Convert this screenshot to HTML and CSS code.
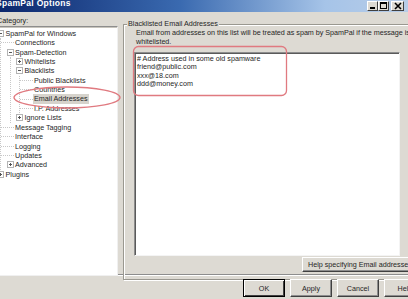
FILE: index.html
```html
<!DOCTYPE html>
<html>
<head>
<meta charset="utf-8">
<link rel="stylesheet" href="styles.css">
</head>
<body>
<div class="window">
  <div class="titlebar">
    <span class="title">SpamPal Options</span>
    <div class="caption-buttons">
      <span class="cbtn"><svg width="11" height="10" viewBox="0 0 11 10"><rect x="3" y="6" width="5" height="2" fill="#000"/></svg></span>
      <span class="cbtn"><svg width="11" height="10" viewBox="0 0 11 10"><rect x="2.5" y="1.5" width="6" height="6" fill="none" stroke="#000"/><rect x="2" y="1" width="7" height="2" fill="#000"/></svg></span>
      <span class="cbtn close"><svg width="12" height="10" viewBox="0 0 12 10"><path d="M3 2 L9 8 M9 2 L3 8" stroke="#000" stroke-width="1.6"/></svg></span>
    </div>
  </div>
  <div class="main">
    <div class="left">
      <div class="label">Category:</div>
      <div class="tree">
        <ul>
          <li><span class="row"><i class="gutter box minus"></i>SpamPal for Windows</span>
            <ul>
              <li><span class="row"><i class="gutter stub"></i>Connections</span></li>
              <li><span class="row"><i class="gutter box minus"></i>Spam-Detection</span>
                <ul>
                  <li><span class="row"><i class="gutter box plus"></i>Whitelists</span></li>
                  <li><span class="row"><i class="gutter box minus"></i>Blacklists</span>
                    <ul>
                      <li><span class="row"><i class="gutter stub"></i>Public Blacklists</span></li>
                      <li><span class="row"><i class="gutter stub"></i>Countries</span></li>
                      <li><span class="row"><i class="gutter stub"></i><span class="sel">Email Addresses</span></span></li>
                      <li><span class="row"><i class="gutter stub"></i>I.P. Addresses</span></li>
                    </ul>
                  </li>
                  <li><span class="row"><i class="gutter box plus"></i>Ignore Lists</span></li>
                </ul>
              </li>
              <li><span class="row"><i class="gutter stub"></i>Message Tagging</span></li>
              <li><span class="row"><i class="gutter stub"></i>Interface</span></li>
              <li><span class="row"><i class="gutter stub"></i>Logging</span></li>
              <li><span class="row"><i class="gutter stub"></i>Updates</span></li>
              <li><span class="row"><i class="gutter box plus"></i>Advanced</span></li>
            </ul>
          </li>
          <li><span class="row"><i class="gutter box plus"></i>Plugins</span></li>
        </ul>
      </div>
    </div>
    <div class="right">
      <div class="group">
        <div class="group-title">Blacklisted Email Addresses</div>
        <p class="desc">Email from addresses on this list will be treated as spam by SpamPal if the message is<br>whitelisted.</p>
        <div class="list">
          <div>&#35; Address used in some old spamware</div>
          <div>friend@public.com</div>
          <div>xxx@18.com</div>
          <div>ddd@money.com</div>
        </div>
        <div class="help-row"><span class="btn help">Help specifying Email addresses</span></div>
      </div>
    </div>
  </div>
  <div class="separator"></div>
  <div class="footer">
    <span class="btn default">OK</span>
    <span class="btn">Apply</span>
    <span class="btn">Cancel</span>
    <span class="btn">Help</span>
  </div>
</div>
<svg class="annot" width="408" height="299" viewBox="0 0 408 299">
  <rect x="133.5" y="46.5" width="153" height="49" rx="5" ry="5" fill="none" stroke="#e07a80" stroke-width="1.3"/>
  <ellipse cx="67" cy="97.5" rx="53" ry="10.5" fill="none" stroke="#e07a80" stroke-width="1.3"/>
</svg>
</body>
</html>
```

FILE: styles.css
```css
html, body {
  margin: 0;
  padding: 0;
  overflow: hidden;
  width: 408px;
  height: 299px;
  background: #dddad3;
}
body {
  position: relative;
  font-family: "Liberation Sans", Arial, sans-serif;
  font-size: 7.2px;
  color: #262626;
}
.window {
  width: 414px;
  height: 299px;
  margin-left: -6px;
  overflow: hidden;
  background: #dddad3;
}
.titlebar {
  height: 12px;
  display: flex;
  align-items: flex-start;
  justify-content: space-between;
  background: linear-gradient(to right, #0a246a 0%, #3a6ab0 45%, #a6c4e8 80%, #b8cde8 100%);
  padding: 0 4px;
}
.title {
  color: #fff;
  font-weight: bold;
  font-size: 8.5px;
  line-height: 8px;
  letter-spacing: 0.3px;
  margin-top: -1px;
  margin-left: -2px;
}
.caption-buttons {
  display: flex;
  margin-top: 1px;
}
.cbtn {
  width: 11px;
  height: 10px;
  background: #dddad3;
  box-sizing: border-box;
  border: 1px solid;
  border-color: #fff #404040 #404040 #fff;
  display: flex;
  align-items: center;
  justify-content: center;
}
.cbtn svg { display: block; flex: none; }
.cbtn.close { width: 13px; margin-left: 2px; }
.main {
  display: flex;
  padding-top: 4px;
  height: 260px;
  box-sizing: border-box;
}
.left {
  width: 124px;
  flex: none;
  padding-left: 1px;
  box-sizing: border-box;
}
.label {
  line-height: 9px;
  height: 10px;
  padding-left: 2px;
}
.tree {
  height: 250px;
  box-sizing: border-box;
  background: #fff;
  border: 1px solid;
  border-color: #8d8d8d #f0f0f0 #f0f0f0 #8d8d8d;
  box-shadow: inset 1px 1px 0 #c8c5bd;
  padding: 1.5px 0 0 1px;
  overflow: hidden;
}
.tree ul {
  list-style: none;
  margin: 0;
  padding: 0;
}
.tree ul ul {
  margin-left: 3px;
  padding-left: 5.5px;
  border-left: 1px dotted #c8c8c8;
}
.row {
  display: flex;
  align-items: center;
  height: 9.42px;
  white-space: nowrap;
}
.gutter {
  flex: none;
  width: 7px;
  margin-right: 1.5px;
  box-sizing: border-box;
}
.box {
  height: 7px;
  border: 1px solid #b4b4b4;
  background-color: #fff;
}
.box.minus {
  background: linear-gradient(#555, #555) center / 3px 1px no-repeat, #fff;
}
.box.plus {
  background: linear-gradient(#555, #555) center / 3px 1px no-repeat,
              linear-gradient(#555, #555) center / 1px 3px no-repeat, #fff;
}
.stub {
  height: 0;
  width: 12.5px;
  margin-left: -5.5px;
  border-top: 1px dotted #c8c8c8;
}
.sel {
  background: #d6d3cc;
  padding: 0 1px;
  margin-left: -1px;
  line-height: 9.4px;
}
.right {
  flex: none;
  width: 300px;
  margin-left: 5px;
}
.group {
  margin-top: 8px;
  height: 256px;
  box-sizing: border-box;
  border: 1px solid #9a9890;
  box-shadow: inset 1px 1px 0 #fff, 1px 1px 0 #fff;
  padding: 0 0 0 12px;
}
.group-title {
  margin: -6px 0 0 -9px;
  width: fit-content;
  padding: 0 1px;
  background: #dddad3;
  line-height: 9px;
  white-space: nowrap;
}
.desc {
  margin: 0;
  line-height: 9px;
  white-space: nowrap;
  letter-spacing: -0.02px;
}
.list {
  margin: 6px 0 0 -2px;
  width: 266px;
  height: 204px;
  box-sizing: border-box;
  background: #fff;
  border: 1px solid;
  border-color: #8d8d8d #f4f4f4 #f4f4f4 #8d8d8d;
  box-shadow: inset 1px 1px 0 #5a5a5a;
  padding: 2px 0 0 2px;
  line-height: 8.4px;
  white-space: nowrap;
}
.help-row {
  display: flex;
  margin-top: 1px;
  padding-left: 166px;
}
.btn {
  display: flex;
  align-items: center;
  justify-content: center;
  height: 16px;
  box-sizing: border-box;
  background: #dddad3;
  border: 1px solid;
  border-color: #fff #404040 #404040 #fff;
  box-shadow: inset -1px -1px 0 #8d8d8d;
  white-space: nowrap;
  flex: none;
}
.btn.help {
  height: 15px;
  padding: 0 5px;
}
.separator {
  margin-top: 2px;
  height: 1px;
  background: #8d8d8d;
  border-bottom: 1px solid #fff;
}
.footer {
  display: flex;
  gap: 5px;
  padding: 3px 0 0 249px;
}
.footer .btn {
  width: 42px;
  height: 18px;
}
.footer .btn.default {
  border-color: #000;
  box-shadow: inset 1px 1px 0 #fff, inset -1px -1px 0 #404040;
}
.annot {
  position: absolute;
  left: 0;
  top: 0;
  pointer-events: none;
}
```
